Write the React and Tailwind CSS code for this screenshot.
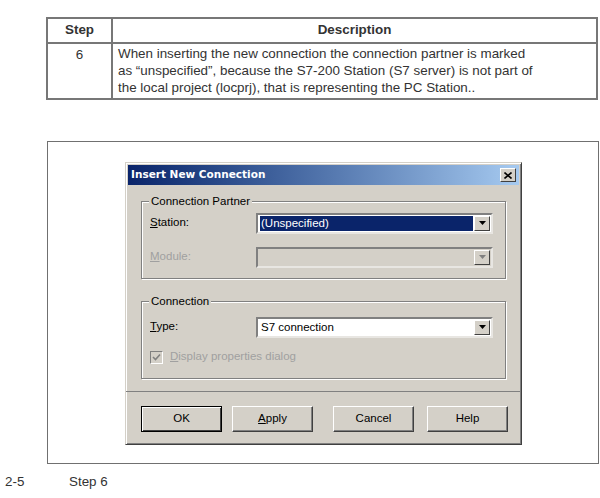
const win = { fontFamily: '"Liberation Sans", Arial, sans-serif' }

function ComboArrow({ disabled }) {
  return (
    <div className="w-[16px] h-full bg-[#d4d0c8] border border-t-white border-l-white border-r-[#404040] border-b-[#404040] flex items-center justify-center">
      <svg width="7" height="4" viewBox="0 0 7 4">
        <path d="M0 0h7L3.5 4z" fill={disabled ? "#808080" : "#000"} />
      </svg>
    </div>
  )
}

function Combo({ value, selected, disabled }) {
  return (
    <div
      className={`w-[237px] h-[21px] border-2 border-t-[#808080] border-l-[#808080] border-r-[#e8e6e2] border-b-[#e8e6e2] flex items-stretch p-[1px] ${disabled ? "bg-[#d4d0c8]" : "bg-white"}`}
    >
      <div className="flex-1 flex items-center pl-[1px] pr-[1px]">
        {value && (
          <span className={`text-[11.5px] leading-[15px] px-[1px] ${selected ? "bg-[#0a246a] text-white w-full" : "text-black"}`}>
            {value}
          </span>
        )}
      </div>
      <ComboArrow disabled={disabled} />
    </div>
  )
}

function Group({ title, children }) {
  return (
    <div className="relative border border-[#808080] shadow-[inset_1px_1px_0_#fff,1px_1px_0_#fff] px-[8px] pt-[8px] pb-[8px]">
      <span className="absolute -top-[8px] left-[7px] bg-[#d4d0c8] px-[2px] text-[11.5px] leading-[15px] text-black">{title}</span>
      {children}
    </div>
  )
}

function Row({ u, rest, disabled, children }) {
  return (
    <div className="flex items-center h-[26px]">
      <span className={`w-[106px] text-[11.5px] ${disabled ? "text-[#a0a0a0]" : "text-black"}`}>
        <span className="underline">{u}</span>{rest}
      </span>
      {children}
    </div>
  )
}

function WinButton({ children, isDefault }) {
  return (
    <div
      className={`shrink-0 w-[81px] h-[26px] bg-[#d4d0c8] flex items-center justify-center text-[11.5px] text-black ${isDefault ? "border border-black shadow-[inset_1px_1px_0_#fff,inset_-1px_-1px_0_#404040]" : "border border-t-white border-l-white border-r-[#404040] border-b-[#404040] shadow-[inset_-1px_-1px_0_#808080]"}`}
    >
      {children}
    </div>
  )
}

export default function App() {
  return (
    <div className="w-[600px] h-[498px] bg-white relative overflow-hidden" style={win}>
      {/* Table */}
      <div className="pt-[17px] pl-[46px] pr-[2px]">
        <table className="w-[552px] border-collapse text-[13.4px] text-[#333]">
          <thead>
            <tr className="h-[25px]">
              <th className="w-[65px] border-2 border-[#777] font-bold text-center">Step</th>
              <th className="border-2 border-[#777] font-bold text-center">Description</th>
            </tr>
          </thead>
          <tbody>
            <tr>
              <td className="border-2 border-[#777] text-center align-top pt-[1px]">6</td>
              <td className="border-2 border-[#777] pl-[5px] pr-[55px] pt-[1px] pb-[2px] leading-[17px]">
                When inserting the new connection the connection partner is marked as “unspecified”, because the S7-200 Station (S7 server) is not part of the local project (locprj), that is representing the PC Station..
              </td>
            </tr>
          </tbody>
        </table>
      </div>

      {/* Figure frame */}
      <div className="mt-[41px] ml-[47px] w-[552px] h-[323px] border border-[#707070] pt-[20px] pl-[77px]">
        {/* Dialog */}
        <div className="w-[397px] h-[283px] bg-[#d4d0c8] border border-t-[#d4d0c8] border-l-[#d4d0c8] border-r-[#404040] border-b-[#404040] shadow-[inset_1px_1px_0_#fff,inset_-1px_-1px_0_#808080] p-[2px] flex flex-col">
          <div className="h-[20px] shrink-0 bg-gradient-to-r from-[#0a246a] to-[#a6caf0] flex items-center justify-between pl-[3px] pr-[3px]">
            <span className="text-white font-bold text-[10.5px]" style={{ fontFamily: '"DejaVu Sans", Verdana, sans-serif' }}>
              Insert New Connection
            </span>
            <div className="w-[16px] h-[14px] bg-[#d4d0c8] border border-t-white border-l-white border-r-[#404040] border-b-[#404040] flex items-center justify-center">
              <svg width="8" height="7" viewBox="0 0 8 7">
                <path d="M0.5 0.5l7 6M7.5 0.5l-7 6" stroke="#000" strokeWidth="1.6" />
              </svg>
            </div>
          </div>

          <div className="px-[13px] pt-[16px] flex flex-col gap-[22px]">
            <Group title="Connection Partner">
              <Row u="S" rest="tation:">
                <Combo value="(Unspecified)" selected />
              </Row>
              <div className="h-[8px]" />
              <Row u="M" rest="odule:" disabled>
                <Combo disabled />
              </Row>
            </Group>

            <Group title="Connection">
              <div className="h-[4px]" />
              <Row u="T" rest="ype:">
                <Combo value="S7 connection" />
              </Row>
              <div className="flex items-center gap-[7px] h-[26px] mt-[4px]">
                <div className="w-[13px] h-[13px] bg-[#d4d0c8] border border-t-[#808080] border-l-[#808080] border-r-white border-b-white flex items-center justify-center">
                  <svg width="9" height="9" viewBox="0 0 9 9">
                    <path d="M1 4l2.5 2.5L8 1.5" stroke="#808080" strokeWidth="1.6" fill="none" />
                  </svg>
                </div>
                <span className="text-[11.5px] text-[#a0a0a0]"><span className="underline">D</span>isplay properties dialog</span>
              </div>
            </Group>
          </div>

          <div className="mt-auto border-t border-[#808080] shadow-[inset_0_1px_0_#fff] mx-[-2px]" />
          <div className="flex items-center pl-[13px] pt-[14px] pb-[10px]">
            <WinButton isDefault>OK</WinButton>
            <div className="w-[10px] shrink-0" />
            <WinButton><span className="underline">A</span>pply</WinButton>
            <div className="w-[20px] shrink-0" />
            <WinButton>Cancel</WinButton>
            <div className="w-[13px] shrink-0" />
            <WinButton>Help</WinButton>
          </div>
        </div>
      </div>

      {/* Caption */}
      <div className="flex items-center mt-[8px] text-[13.4px] text-[#333]">
        <span className="ml-[5px] w-[64px]">2-5</span>
        <span>Step 6</span>
      </div>
    </div>
  )
}
